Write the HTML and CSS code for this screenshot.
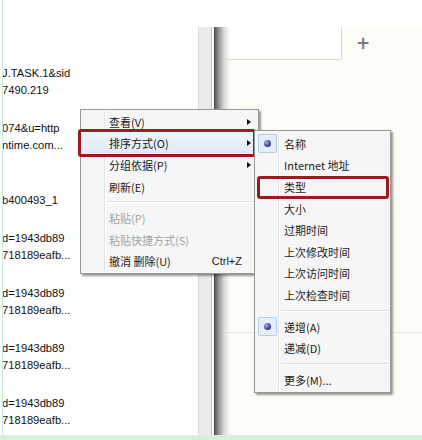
FILE: index.html
```html
<!DOCTYPE html>
<html lang="zh-CN">
<head>
    <meta charset="UTF-8">
    <title>排序方式</title>
    <link rel="stylesheet" href="styles.css">
</head>
<body>
    <div class="frame">
        <div class="main">
            <div class="list">
                <div class="entry"><p>J.TASK.1&amp;sid</p><p>7490.219</p></div>
                <div class="entry"><p>074&amp;u=http</p><p>ntime.com...</p></div>
                <div class="entry"><p>&nbsp;</p><p>b400493_1</p></div>
                <div class="entry"><p>d=1943db89</p><p>718189eafb...</p></div>
                <div class="entry"><p>d=1943db89</p><p>718189eafb...</p></div>
                <div class="entry"><p>d=1943db89</p><p>718189eafb...</p></div>
                <div class="entry"><p>d=1943db89</p><p>718189eafb...</p></div>
            </div>
            <div class="divider"></div>
            <div class="pane">
                <div class="tabbar">
                    <div class="tab"></div>
                    <span class="plus">+</span>
                </div>
                <div class="pane-body"></div>
            </div>
        </div>
        <div class="footer"></div>

        <!-- 右键菜单 -->
        <div class="menu menu-main">
            <div class="item"><span class="gutter"></span><span class="label">查看(V)</span><span class="arrow"></span></div>
            <div class="item active marked"><span class="gutter"></span><span class="label">排序方式(O)</span><span class="arrow"></span></div>
            <div class="item"><span class="gutter"></span><span class="label">分组依据(P)</span><span class="arrow"></span></div>
            <div class="item"><span class="gutter"></span><span class="label">刷新(E)</span></div>
            <div class="sep"></div>
            <div class="item disabled"><span class="gutter"></span><span class="label">粘贴(P)</span></div>
            <div class="item disabled"><span class="gutter"></span><span class="label">粘贴快捷方式(S)</span></div>
            <div class="item"><span class="gutter"></span><span class="label">撤消 删除(U)</span><span class="shortcut">Ctrl+Z</span></div>
        </div>

        <div class="menu menu-sub">
            <div class="item"><span class="gutter"><span class="radio"></span></span><span class="label">名称</span></div>
            <div class="item"><span class="gutter"></span><span class="label">Internet 地址</span></div>
            <div class="item marked"><span class="gutter"></span><span class="label">类型</span></div>
            <div class="item"><span class="gutter"></span><span class="label">大小</span></div>
            <div class="item"><span class="gutter"></span><span class="label">过期时间</span></div>
            <div class="item"><span class="gutter"></span><span class="label">上次修改时间</span></div>
            <div class="item"><span class="gutter"></span><span class="label">上次访问时间</span></div>
            <div class="item"><span class="gutter"></span><span class="label">上次检查时间</span></div>
            <div class="sep"></div>
            <div class="item"><span class="gutter"><span class="radio"></span></span><span class="label">递增(A)</span></div>
            <div class="item"><span class="gutter"></span><span class="label">递减(D)</span></div>
            <div class="sep"></div>
            <div class="item"><span class="gutter"></span><span class="label">更多(M)...</span></div>
        </div>
    </div>
</body>
</html>
```

FILE: styles.css
```css
body {
    margin: 0;
    background: #ffffff;
    font-family: "Noto Sans CJK SC", sans-serif;
}
.frame {
    position: relative;
    width: 422px;
    height: 440px;
    overflow: hidden;
    display: flex;
    flex-direction: column;
}
.main {
    display: flex;
    height: 435px;
}
.footer {
    height: 5px;
    background: #d6f1da;
}

/* 左侧列表 */
.list {
    width: 195px;
    margin-left: 2px;
    border-left: 1px solid #c9ebcf;
    padding-top: 65px;
    overflow: hidden;
    font-family: "Liberation Sans", Arial, sans-serif;
    font-size: 11.2px;
    color: #111;
}
.entry {
    margin-bottom: 21px;
}
.entry p {
    margin: 0 0 0 -1px;
    height: 17px;
    line-height: 17px;
    white-space: nowrap;
}

/* 分隔条 */
.divider {
    width: 12px;
    margin-top: 27px;
    background: #ececec;
    border-left: 1px solid #dadada;
    border-right: 1px solid #c4c4c4;
}
.pane {
    position: relative;
    flex: 1;
    margin-top: 27px;
    margin-left: 1px;
    background: #fdfdf8;
    border-left: 1px solid #f4f4f4;
}
.pane::before {
    content: "";
    position: absolute;
    top: 0;
    bottom: 0;
    left: 0;
    width: 16px;
    background: linear-gradient(to right, #4a4a4a, #8a8a8a 4px, #d8d8d6 10px, rgba(253, 253, 248, 0));
}
.tabbar {
    display: flex;
    align-items: center;
    height: 33px;
}
.tab {
    width: 127px;
    height: 32px;
    background: #ffffff;
    border-right: 1px solid #d6d6d6;
    border-bottom: 1px solid #d6d6d6;
    align-self: flex-start;
}
.plus {
    margin-left: 14px;
    font-family: "DejaVu Sans", sans-serif;
    font-size: 17px;
    font-weight: bold;
    color: #7a7a7a;
    line-height: 1;
}
.pane-body {
    height: 272px;
    border-bottom: 1px solid #e6e6e0;
}

/* 菜单 */
.menu {
    position: absolute;
    background: #f6f6f6;
    border: 1px solid #979797;
    box-shadow: 2px 2px 2px rgba(0, 0, 0, 0.4);
    font-size: 11px;
    color: #1a1a1a;
    padding: 1px 0;
}
.menu::before {
    content: "";
    position: absolute;
    top: 1px;
    bottom: 1px;
    left: 23px;
    width: 1px;
    background: #e2e3e3;
    border-right: 1px solid #ffffff;
}
.menu-main {
    left: 80px;
    top: 109px;
    width: 177px;
}
.menu-sub {
    left: 254px;
    top: 130px;
    width: 135px;
    padding-top: 2px;
}
.item {
    position: relative;
    display: flex;
    align-items: center;
    height: 21.6px;
    padding-right: 7px;
}
.gutter {
    display: flex;
    align-items: center;
    justify-content: center;
    width: 24px;
    height: 100%;
    flex-shrink: 0;
}
.label {
    margin-left: 4px;
    white-space: nowrap;
}
.menu-sub .label {
    margin-left: 5px;
}
.arrow {
    margin-left: auto;
    width: 0;
    height: 0;
    border-top: 3.5px solid transparent;
    border-bottom: 3.5px solid transparent;
    border-left: 4px solid #111;
}
.shortcut {
    margin-left: auto;
    margin-right: 9px;
    font-family: "Liberation Sans", Arial, sans-serif;
}
.disabled {
    color: #a3a3a3;
}
.active {
    background: linear-gradient(#eef3fb, #e1eaf7);
}
.sep {
    height: 1px;
    margin: 4px 2px 4px 26px;
    background: #e0e0e0;
    border-bottom: 1px solid #ffffff;
}
.radio {
    position: relative;
    width: 19px;
    height: 19px;
    box-sizing: border-box;
    border: 1px solid #b3cdec;
    border-radius: 2px;
    background: #e6eef9;
}
.radio::after {
    content: "";
    position: absolute;
    left: 5px;
    top: 5px;
    width: 7px;
    height: 7px;
    border-radius: 50%;
    background: radial-gradient(circle at 35% 35%, #aab3e6, #3a3f9a 60%, #1c1f66);
}

/* 标注红框 */
.marked::after {
    content: "";
    position: absolute;
    border: 3px solid #9d1a1f;
    border-radius: 3px;
}
.menu-main .marked::after {
    left: -3px;
    right: 2px;
    top: -3.6px;
    bottom: -2.8px;
}
.menu-sub .marked::after {
    left: 2px;
    right: 1px;
    top: 0;
    bottom: -1.5px;
}
```
